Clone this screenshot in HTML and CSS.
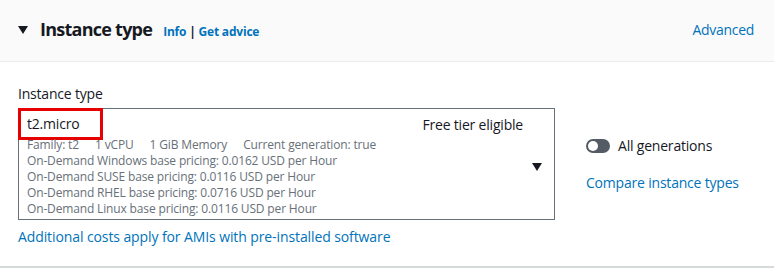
FILE: index.html
```html
<!DOCTYPE html>
<html lang="en">
<head>
  <meta charset="UTF-8" />
  <title>Instance type</title>
  <link rel="stylesheet" href="styles.css">
</head>
<body>
  <div class="panel">
    <div class="panel-header">
      <div class="title">
        <span class="caret"></span>
        <h2>Instance type</h2>
        <span class="info"><a href="#">Info</a> | <a href="#">Get advice</a></span>
      </div>
      <a href="#" class="advanced">Advanced</a>
    </div>
    <div class="panel-body">
      <div class="field">
        <label>Instance type</label>
        <div class="select">
          <div class="select-top">
            <span class="selected">t2.micro</span>
            <span class="tag">Free tier eligible</span>
          </div>
          <div class="details">
            <div class="meta"><span>Family: t2</span><span>1 vCPU</span><span>1 GiB Memory</span><span>Current generation: true</span></div>
            <div>On-Demand Windows base pricing: 0.0162 USD per Hour</div>
            <div>On-Demand SUSE base pricing: 0.0116 USD per Hour</div>
            <div>On-Demand RHEL base pricing: 0.0716 USD per Hour</div>
            <div>On-Demand Linux base pricing: 0.0116 USD per Hour</div>
          </div>
          <span class="arrow"></span>
        </div>
        <a href="#" class="note">Additional costs apply for AMIs with pre-installed software</a>
      </div>
      <div class="side">
        <div class="toggle-row">
          <span class="toggle"></span>
          <span>All generations</span>
        </div>
        <a href="#">Compare instance types</a>
      </div>
    </div>
  </div>
</body>
</html>
```

FILE: styles.css
```css
body {
  margin: 0;
  font-family: "Open Sans", "Liberation Sans", sans-serif;
  font-size: 14px;
  color: #16191f;
  background: #fff;
}
a {
  color: #0073bb;
  text-decoration: none;
}
.panel {
  border-bottom: 2px solid #d5dbdb;
  height: 268px;
  box-sizing: border-box;
}
.panel-header {
  display: flex;
  justify-content: space-between;
  align-items: center;
  height: 62px;
  padding: 0 20px 3px 18px;
  box-sizing: border-box;
  background: #fafafa;
  border-bottom: 1px solid #eaeded;
}
.title {
  display: flex;
  align-items: baseline;
}
.caret {
  width: 0;
  height: 0;
  border-left: 5px solid transparent;
  border-right: 5px solid transparent;
  border-top: 8px solid #16191f;
  margin-right: 12px;
  align-self: center;
  margin-top: 1px;
}
h2 {
  margin: 0;
  font-size: 18px;
  font-weight: 700;
  letter-spacing: -0.75px;
  margin-right: 11px;
}
.info {
  font-size: 12px;
  font-weight: 700;
  letter-spacing: -0.2px;
}
.advanced {
  font-size: 14px;
  letter-spacing: -0.3px;
}
.panel-body {
  display: flex;
  padding: 22px 18px 0 18px;
}
.field {
  width: 537px;
}
label {
  display: block;
  font-size: 14px;
  line-height: 20px;
  margin-bottom: 4px;
  letter-spacing: -0.2px;
}
.select {
  position: relative;
  border: 1px solid #687078;
  height: 110px;
}
.select-top {
  display: flex;
  justify-content: space-between;
  align-items: center;
  padding-right: 31px;
}
.selected {
  display: block;
  border: 3px solid #e60000;
  width: 73px;
  height: 26px;
  line-height: 26px;
  padding-left: 6px;
  margin: -1px 0 0 -1px;
  letter-spacing: -0.2px;
}
.tag {
  font-size: 14px;
  letter-spacing: -0.2px;
}
.details {
  font-size: 12px;
  color: #687078;
  line-height: 16px;
  padding-left: 8px;
  margin-top: -3px;
  letter-spacing: -0.15px;
}
.meta span {
  margin-right: 16px;
}
.arrow {
  position: absolute;
  right: 12px;
  top: 54px;
  width: 0;
  height: 0;
  border-left: 5px solid transparent;
  border-right: 5px solid transparent;
  border-top: 8px solid #16191f;
}
.note {
  display: block;
  margin-top: 7px;
  font-size: 14px;
  letter-spacing: -0.1px;
}
.side {
  margin-left: 31px;
  padding-top: 52px;
  letter-spacing: -0.2px;
}
.toggle-row {
  display: flex;
  align-items: center;
  gap: 8px;
  margin-bottom: 18px;
}
.toggle {
  position: relative;
  width: 24px;
  height: 14px;
  border-radius: 7px;
  background: #545b64;
}
.toggle::after {
  content: "";
  position: absolute;
  left: 2px;
  top: 2px;
  width: 10px;
  height: 10px;
  border-radius: 50%;
  background: #fff;
}
```
